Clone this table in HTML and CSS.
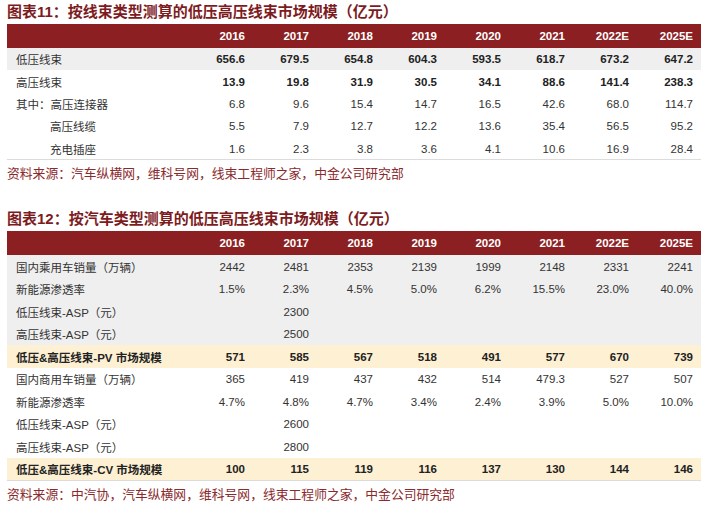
FILE: index.html
```html
<!DOCTYPE html>
<html lang="zh">
<head>
<meta charset="utf-8">
<title>线束市场规模</title>
<link rel="stylesheet" href="styles.css">
</head>
<body>
<div class="page">
  <section class="block">
    <h2 class="title">图表11：按线束类型测算的低压高压线束市场规模（亿元）</h2>
    <table class="data t1">
      <thead>
        <tr><th class="label"></th><th>2016</th><th>2017</th><th>2018</th><th>2019</th><th>2020</th><th>2021</th><th>2022E</th><th>2025E</th></tr>
      </thead>
      <tbody>
        <tr class="gray bold-num"><td class="label">低压线束</td><td>656.6</td><td>679.5</td><td>654.8</td><td>604.3</td><td>593.5</td><td>618.7</td><td>673.2</td><td>647.2</td></tr>
        <tr class="bold-num"><td class="label">高压线束</td><td>13.9</td><td>19.8</td><td>31.9</td><td>30.5</td><td>34.1</td><td>88.6</td><td>141.4</td><td>238.3</td></tr>
        <tr><td class="label">其中：高压连接器</td><td>6.8</td><td>9.6</td><td>15.4</td><td>14.7</td><td>16.5</td><td>42.6</td><td>68.0</td><td>114.7</td></tr>
        <tr><td class="label indent">高压线缆</td><td>5.5</td><td>7.9</td><td>12.7</td><td>12.2</td><td>13.6</td><td>35.4</td><td>56.5</td><td>95.2</td></tr>
        <tr><td class="label indent">充电插座</td><td>1.6</td><td>2.3</td><td>3.8</td><td>3.6</td><td>4.1</td><td>10.6</td><td>16.9</td><td>28.4</td></tr>
      </tbody>
    </table>
    <p class="source">资料来源：汽车纵横网，维科号网，线束工程师之家，中金公司研究部</p>
  </section>

  <section class="block second">
    <h2 class="title">图表12：按汽车类型测算的低压高压线束市场规模（亿元）</h2>
    <table class="data t2">
      <thead>
        <tr><th class="label"></th><th>2016</th><th>2017</th><th>2018</th><th>2019</th><th>2020</th><th>2021</th><th>2022E</th><th>2025E</th></tr>
      </thead>
      <tbody>
        <tr class="gray"><td class="label">国内乘用车销量（万辆）</td><td>2442</td><td>2481</td><td>2353</td><td>2139</td><td>1999</td><td>2148</td><td>2331</td><td>2241</td></tr>
        <tr class="gray"><td class="label">新能源渗透率</td><td>1.5%</td><td>2.3%</td><td>4.5%</td><td>5.0%</td><td>6.2%</td><td>15.5%</td><td>23.0%</td><td>40.0%</td></tr>
        <tr class="gray"><td class="label">低压线束-ASP（元）</td><td></td><td>2300</td><td></td><td></td><td></td><td></td><td></td><td></td></tr>
        <tr class="gray"><td class="label">高压线束-ASP（元）</td><td></td><td>2500</td><td></td><td></td><td></td><td></td><td></td><td></td></tr>
        <tr class="total"><td class="label">低压&amp;高压线束-PV 市场规模</td><td>571</td><td>585</td><td>567</td><td>518</td><td>491</td><td>577</td><td>670</td><td>739</td></tr>
        <tr><td class="label">国内商用车销量（万辆）</td><td>365</td><td>419</td><td>437</td><td>432</td><td>514</td><td>479.3</td><td>527</td><td>507</td></tr>
        <tr><td class="label">新能源渗透率</td><td>4.7%</td><td>4.8%</td><td>4.7%</td><td>3.4%</td><td>2.4%</td><td>3.9%</td><td>5.0%</td><td>10.0%</td></tr>
        <tr><td class="label">低压线束-ASP（元）</td><td></td><td>2600</td><td></td><td></td><td></td><td></td><td></td><td></td></tr>
        <tr><td class="label">高压线束-ASP（元）</td><td></td><td>2800</td><td></td><td></td><td></td><td></td><td></td><td></td></tr>
        <tr class="total"><td class="label">低压&amp;高压线束-CV 市场规模</td><td>100</td><td>115</td><td>119</td><td>116</td><td>137</td><td>130</td><td>144</td><td>146</td></tr>
      </tbody>
    </table>
    <p class="source">资料来源：中汽协，汽车纵横网，维科号网，线束工程师之家，中金公司研究部</p>
  </section>
</div>
</body>
</html>
```

FILE: styles.css
```css
html, body {
  margin: 0;
  padding: 0;
  background: #ffffff;
}

body {
  font-family: "Liberation Sans", "Noto Sans CJK SC", sans-serif;
  color: #333333;
}

.page {
  padding: 0 5px 0 7px;
}

.block.second {
  margin-top: 23px;
}

.title {
  margin: 0;
  height: 24px;
  line-height: 24px;
  font-size: 15px;
  font-weight: bold;
  color: #7d1c1e;
  white-space: nowrap;
}

.data {
  border-collapse: collapse;
  table-layout: fixed;
  width: 694px;
  font-size: 11.5px;
  border-bottom: 1px solid #dcdcdc;
}

.data th,
.data td {
  padding: 0 8px 0 0;
  text-align: right;
  width: 56px;
  white-space: nowrap;
}

.data .label {
  width: 173px;
  padding: 0 0 0 9px;
  text-align: left;
}

.data thead tr {
  background: #8b1f22;
  height: 24px;
}

.data th {
  color: #ffffff;
  font-weight: bold;
  font-size: 11.5px;
}

.t1 tbody tr {
  height: 22.4px;
}

.t2 tbody tr {
  height: 22.5px;
}

.data tr.gray {
  background: #efefef;
}

.data tr.total {
  background: #fdf0d3;
  font-weight: bold;
  color: #222222;
}

.bold-num td {
  font-weight: bold;
  color: #222222;
}

.bold-num td.label {
  font-weight: normal;
  color: #333333;
}

.data .label.indent {
  padding-left: 43px;
}

.source {
  margin: 4px 0 0 0;
  height: 20px;
  line-height: 20px;
  font-size: 12.8px;
  color: #8a2a2c;
  white-space: nowrap;
}
```
